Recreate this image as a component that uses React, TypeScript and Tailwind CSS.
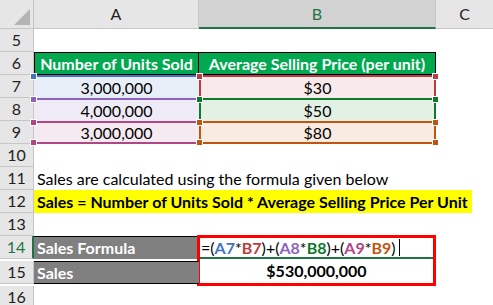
import React from "react";

const H = ({ c, x }: { c: string; x: string }) => (
  <span className={`absolute w-[7px] h-[7px] border border-white ${c} ${x}`} />
);

export default function App() {
  const rowH = "h-[23px]";
  const rn = (n: number, extra = "") => (
    <div
      className={`${rowH} flex items-center justify-center border-b border-r border-[#c6c6c6] bg-[#e6e6e6] text-[#222] ${extra}`}
    >
      {n}
    </div>
  );
  return (
    <div
      className="w-[493px] h-[305px] overflow-hidden bg-white text-[16px] text-black"
      style={{ fontFamily: "Lato, 'Noto Sans', sans-serif" }}
    >
      <div className="grid grid-cols-[34px_165px_237px_57px]">
        {/* header row */}
        <div className="h-[29px] relative bg-[#e6e6e6] border-r border-b border-[#c6c6c6]">
          <div
            className="absolute right-[3px] bottom-[3px] w-[16px] h-[16px] bg-[#b4b4b4]"
            style={{ clipPath: "polygon(100% 0,100% 100%,0 100%)" }}
          />
        </div>
        <div className="h-[29px] flex items-center justify-center bg-[#e6e6e6] border-r border-b border-[#c6c6c6] text-[#222]">
          A
        </div>
        <div className="h-[29px] flex items-center justify-center bg-[#d2d2d2] border-r border-[#c6c6c6] border-b-2 border-b-[#217346] text-[#217346]">
          B
        </div>
        <div className="h-[29px] flex items-center justify-center bg-[#e6e6e6] border-b border-[#c6c6c6] text-[#222]">
          C
        </div>

        {/* row 5 */}
        {rn(5)}
        <div className={rowH} />
        <div className={rowH} />
        <div className={rowH} />

        {/* row 6 */}
        {rn(6)}
        <div className={`${rowH} flex items-center justify-center bg-[#00a84f] border border-black text-white font-bold whitespace-nowrap`}>
          Number of Units Sold
        </div>
        <div className={`${rowH} flex items-center justify-center bg-[#00a84f] border border-l-0 border-black text-white font-bold whitespace-nowrap`}>
          Average Selling Price (per unit)
        </div>
        <div className={rowH} />

        {/* row 7 */}
        {rn(7)}
        <div className={`${rowH} relative flex items-center justify-center bg-[#e8eef8] border-t-2 border-[#4472c4]`}>
          3,000,000
          <H c="bg-[#4472c4]" x="-left-[4px] -top-[4px]" />
        </div>
        <div className={`${rowH} relative flex items-center justify-center bg-[#f8eaea] border-t-2 border-x-2 border-[#c0393b]`}>
          $30
          <H c="bg-[#c0393b]" x="-left-[5px] -top-[4px]" />
          <H c="bg-[#c0393b]" x="-right-[5px] -top-[4px]" />
        </div>
        <div className={rowH} />

        {/* row 8 */}
        {rn(8)}
        <div className={`${rowH} relative flex items-center justify-center bg-[#efebf6] border-t-2 border-[#8e62bd]`}>
          4,000,000
          <H c="bg-[#8e62bd]" x="-left-[4px] -top-[4px]" />
        </div>
        <div className={`${rowH} relative flex items-center justify-center bg-[#e3f1e5] border-t-2 border-x-2 border-[#0b7a2a]`}>
          $50
          <H c="bg-[#0b7a2a]" x="-left-[5px] -top-[4px]" />
          <H c="bg-[#0b7a2a]" x="-right-[5px] -top-[4px]" />
        </div>
        <div className={rowH} />

        {/* row 9 */}
        {rn(9)}
        <div className={`${rowH} relative flex items-center justify-center bg-[#f6eaf1] border-y-2 border-[#b24586]`}>
          3,000,000
          <H c="bg-[#b24586]" x="-left-[4px] -top-[4px]" />
          <H c="bg-[#b24586]" x="-left-[4px] -bottom-[4px]" />
        </div>
        <div className={`${rowH} relative flex items-center justify-center bg-[#faebe1] border-2 border-[#c0550f]`}>
          $80
          <H c="bg-[#c0550f]" x="-left-[5px] -top-[4px]" />
          <H c="bg-[#c0550f]" x="-right-[5px] -top-[4px]" />
          <H c="bg-[#c0550f]" x="-left-[5px] -bottom-[4px]" />
          <H c="bg-[#c0550f]" x="-right-[5px] -bottom-[4px]" />
        </div>
        <div className={rowH} />

        {/* row 10 */}
        {rn(10)}
        <div className={`${rowH} col-span-3`} />

        {/* row 11 */}
        {rn(11)}
        <div className={`${rowH} col-span-3 flex items-center pl-[3px] whitespace-nowrap`}>
          Sales are calculated using the formula given below
        </div>

        {/* row 12 */}
        {rn(12)}
        <div className={`${rowH} col-span-3 flex items-center`}>
          <span className="h-full flex items-center bg-[#ffff00] pl-[3px] pr-[4px] font-bold whitespace-nowrap">
            Sales = Number of Units Sold * Average Selling Price Per Unit
          </span>
        </div>

        {/* row 13 */}
        {rn(13)}
        <div className={`${rowH} col-span-3`} />

        {/* row 14-15 */}
        {rn(14, "bg-[#d2d2d2] text-[#217346] border-r-2 border-r-[#217346]")}
        <div className={`${rowH} flex items-center pl-[3px] bg-[#808080] text-white font-bold border-t border-black`}>
          Sales Formula
        </div>
        <div className="row-span-2 border-[3px] border-[#ff0000] -ml-[2px] -mt-[1px] flex flex-col">
          <div className="h-[21px] flex items-center pl-[1px] border-b-2 border-[#217346] whitespace-nowrap">
            <span>=(</span>
            <span className="font-bold text-[#4472c4]">A7</span>
            <span>*</span>
            <span className="font-bold text-[#c0393b]">B7</span>
            <span>)+(</span>
            <span className="font-bold text-[#8e62bd]">A8</span>
            <span>*</span>
            <span className="font-bold text-[#0b7a2a]">B8</span>
            <span>)+(</span>
            <span className="font-bold text-[#b24586]">A9</span>
            <span>*</span>
            <span className="font-bold text-[#c0550f]">B9</span>
            <span>)</span>
            <span className="ml-[3px] w-px h-[17px] bg-black" />
          </div>
          <div className="flex-1 flex items-center justify-center font-bold">$530,000,000</div>
        </div>
        <div className={rowH} />

        {rn(15)}
        <div className={`${rowH} flex items-center pl-[3px] bg-[#808080] text-white font-bold border-y border-black`}>
          Sales
        </div>
        <div className={rowH} />

        {rn(16)}
        <div className={`${rowH} col-span-3`} />
      </div>
    </div>
  );
}
